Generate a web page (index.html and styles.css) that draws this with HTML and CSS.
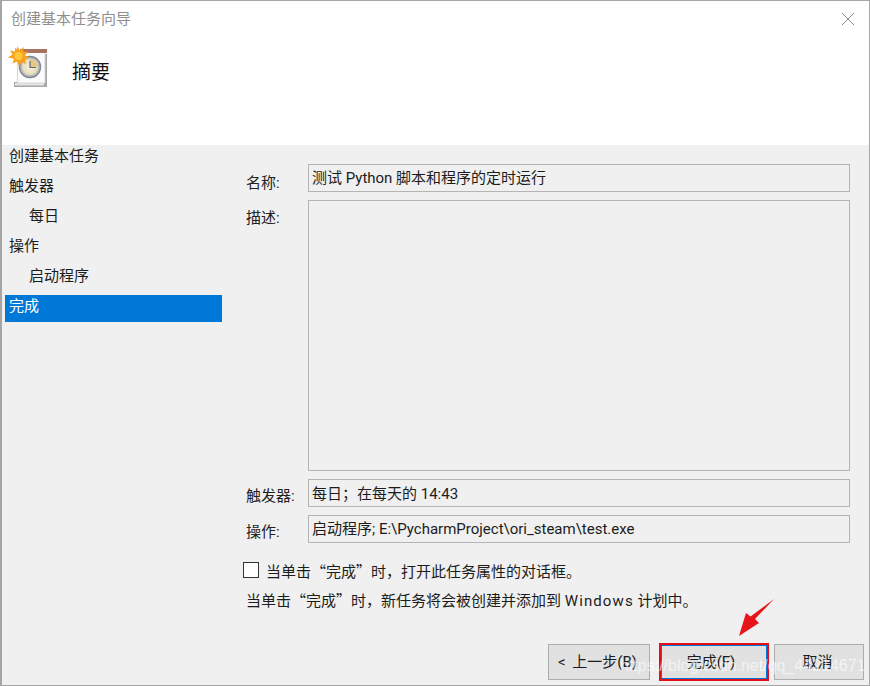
FILE: index.html
```html
<!DOCTYPE html>
<html lang="zh-CN">
<head>
<meta charset="utf-8">
<title>创建基本任务向导</title>
<link rel="stylesheet" href="styles.css">
</head>
<body>
<div class="window">
  <header class="header">
    <div class="titlebar">
      <span class="title">创建基本任务向导</span>
      <svg class="close" width="14" height="14" viewBox="0 0 14 14"><path d="M1 1L13 13M13 1L1 13" stroke="#8a8a8a" stroke-width="1" fill="none"/></svg>
    </div>
    <div class="banner">
      <svg class="task-icon" width="42" height="42" viewBox="0 0 42 42">
        <defs>
          <radialGradient id="face" cx="0.5" cy="0.5" r="0.5"><stop offset="0" stop-color="#f6f2e4"/><stop offset="1" stop-color="#e8dcb8"/></radialGradient>
        </defs>
        <path d="M6 41H39V8H37V39H6Z" fill="#a5a5a5"/>
        <rect x="6.5" y="36.5" width="30" height="3.5" fill="#e4e4e4" stroke="#a8a8a8" stroke-width="1"/>
        <rect x="9.5" y="5" width="27.5" height="32" fill="#fbfbfb" stroke="#d6d6d6" stroke-width="1"/>
        <rect x="12" y="3" width="27" height="4" fill="#a8745f"/>
        <circle cx="22" cy="21" r="10.5" fill="#bdbdbd" stroke="#7f8790" stroke-width="1.4"/>
        <circle cx="22" cy="21" r="8" fill="url(#face)"/>
        <path d="M22 13A8 8 0 0 1 30 21H22Z" fill="#e6c98a"/>
        <path d="M22 15V21.5H28" stroke="#5f6a75" stroke-width="1.2" fill="none"/>
        <path d="M9.5 0L11.4 4.6L15.5 1L15.4 6L20 5.5L17 9.4L21.5 11.5L16.8 13.2L18 18L13.4 16L11 20.5L9.2 15.6L4.6 17.6L6 12.8L0 11.5L4.6 8.6L2 4.4L7 5.4L7.2 1.4L9 3.6Z" fill="#f9a11b"/>
        <circle cx="10.5" cy="10" r="4" fill="#ffc93a"/>
      </svg>
      <h1 class="heading">摘要</h1>
    </div>
  </header>
  <div class="main">
    <nav class="sidebar">
      <div class="step">创建基本任务</div>
      <div class="step">触发器</div>
      <div class="step sub">每日</div>
      <div class="step">操作</div>
      <div class="step sub">启动程序</div>
      <div class="step active">完成</div>
    </nav>
    <section class="content">
      <div class="row">
        <label class="label label-name">名称:</label>
        <div class="field">测试 Python 脚本和程序的定时运行</div>
      </div>
      <div class="row">
        <label class="label label-desc">描述:</label>
        <div class="field area"></div>
      </div>
      <div class="row">
        <label class="label">触发器:</label>
        <div class="field">每日<span class="cjk">；</span>在每天的 14:43</div>
      </div>
      <div class="row">
        <label class="label">操作:</label>
        <div class="field">启动程序; E:\PycharmProject\ori_steam\test.exe</div>
      </div>
      <div class="check-row">
        <span class="checkbox"></span>
        <span>当单击<span class="quote">“</span>完成<span class="quote">”</span>时，打开此任务属性的对话框。</span>
      </div>
      <p class="note">当单击<span class="quote">“</span>完成<span class="quote">”</span>时，新任务将会被创建并添加到 <span class="wide">Windows</span> 计划中。</p>
    </section>
  </div>
  <footer class="footer">
    <button class="btn back">&lt; 上一步(B)</button>
    <button class="btn finish">完成(F)</button>
    <button class="btn cancel">取消</button>
  </footer>
  <svg class="arrow" width="40" height="40" viewBox="0 0 40 40"><path d="M36 1L17 21L21 25L1 38L8 15L12.5 18.5Z" fill="#e8141c"/></svg>
  <span class="watermark">https://blog.csdn.net/qq_44214671</span>
</div>
</body>
</html>
```
FILE: styles.css
```css
* { box-sizing: border-box; }
html, body { margin: 0; padding: 0; }
body {
  width: 870px;
  height: 686px;
  overflow: hidden;
  font-family: "Roboto", "Noto Sans CJK SC", sans-serif;
  font-size: 15px;
  color: #1c1c1c;
}
.window {
  position: relative;
  width: 870px;
  height: 686px;
  display: flex;
  flex-direction: column;
  background: #f0f0f0;
  border-top: 1px solid #a6a6a6;
  border-left: 2px solid #a6a6a6;
  border-right: 1px solid #a6a6a6;
  border-bottom: 1px solid #a6a6a6;
}
.header {
  height: 144px;
  flex: none;
  background: #fff;
  display: flex;
  flex-direction: column;
}
.titlebar {
  height: 38px;
  display: flex;
  align-items: center;
  justify-content: space-between;
  padding: 0 14px 3px 9px;
}
.title { color: #8f8f8f; font-size: 15px; line-height: 20px; }
.close { display: block; }
.banner {
  display: flex;
  align-items: flex-start;
  padding-left: 6px;
}
.task-icon { display: block; margin-top: 7px; flex: none; }
.heading {
  margin: 21px 0 0 22px;
  font-size: 19px;
  font-weight: 400;
  line-height: 26px;
  color: #111;
}
.main {
  height: 453px;
  flex: none;
  display: flex;
}
.sidebar {
  width: 220px;
  flex: none;
  padding: 1px 0 0 3px;
  display: flex;
  flex-direction: column;
}
.step {
  height: 30px;
  padding-left: 4px;
  line-height: 20px;
}
.sub { padding-left: 24px; }
.step.active {
  height: 27px;
  margin-top: -1px;
  line-height: 22px;
  background: #0078d7;
  color: #fff;
}
.content {
  flex: 1;
  min-width: 0;
  padding: 19px 19px 0 24px;
  display: flex;
  flex-direction: column;
}
.row {
  display: flex;
  margin-bottom: 8px;
  flex: none;
}
.label {
  width: 62px;
  flex: none;
  line-height: 34px;
  height: 28px;
  color: #222;
}
.label-name { line-height: 38px; }
.label-desc { line-height: 36px; }
.field {
  flex: 1;
  height: 28px;
  padding: 0 3px;
  line-height: 26px;
  background: #f0f0f0;
  border: 1px solid #b4b4b4;
  white-space: nowrap;
}
.area { height: 271px; }
.cjk { font-family: "Noto Sans CJK SC", sans-serif; }
.quote {
  font-family: "Noto Sans CJK SC", sans-serif;
  display: inline-block;
  width: 15px;
}
.quote:first-of-type { text-align: right; }
.wide { letter-spacing: 1.1px; }
.check-row {
  display: flex;
  align-items: center;
  gap: 7px;
  height: 20px;
  margin-top: 9px;
  margin-left: -3px;
}
.checkbox {
  width: 16px;
  height: 16px;
  flex: none;
  background: #fff;
  border: 1.5px solid #333;
}
.note {
  margin: 10px 0 0;
  line-height: 20px;
}
.footer {
  flex: 1;
  display: flex;
  align-items: flex-start;
  padding: 46px 5px 0 546px;
}
.btn {
  height: 36px;
  padding: 0 0 3px;
  font: inherit;
  color: #1c1c1c;
  background: #e1e1e1;
  border: 1px solid #adadad;
}
.back { width: 102px; padding-right: 3px; word-spacing: 3px; }
.finish {
  width: 108px;
  margin-left: 10px;
  margin-right: 6px;
  padding-right: 6px;
  border: 2px solid #0078d7;
  outline: 2px solid #e30f17;
  outline-offset: -1px;
}
.cancel { width: 90px; padding-right: 3px; }
.arrow {
  position: absolute;
  left: 736px;
  top: 597px;
}
.watermark {
  position: absolute;
  left: 618px;
  top: 656px;
  font-family: "Liberation Sans", sans-serif;
  font-size: 16px;
  color: rgba(255,255,255,0.62);
  white-space: nowrap;
}
```
